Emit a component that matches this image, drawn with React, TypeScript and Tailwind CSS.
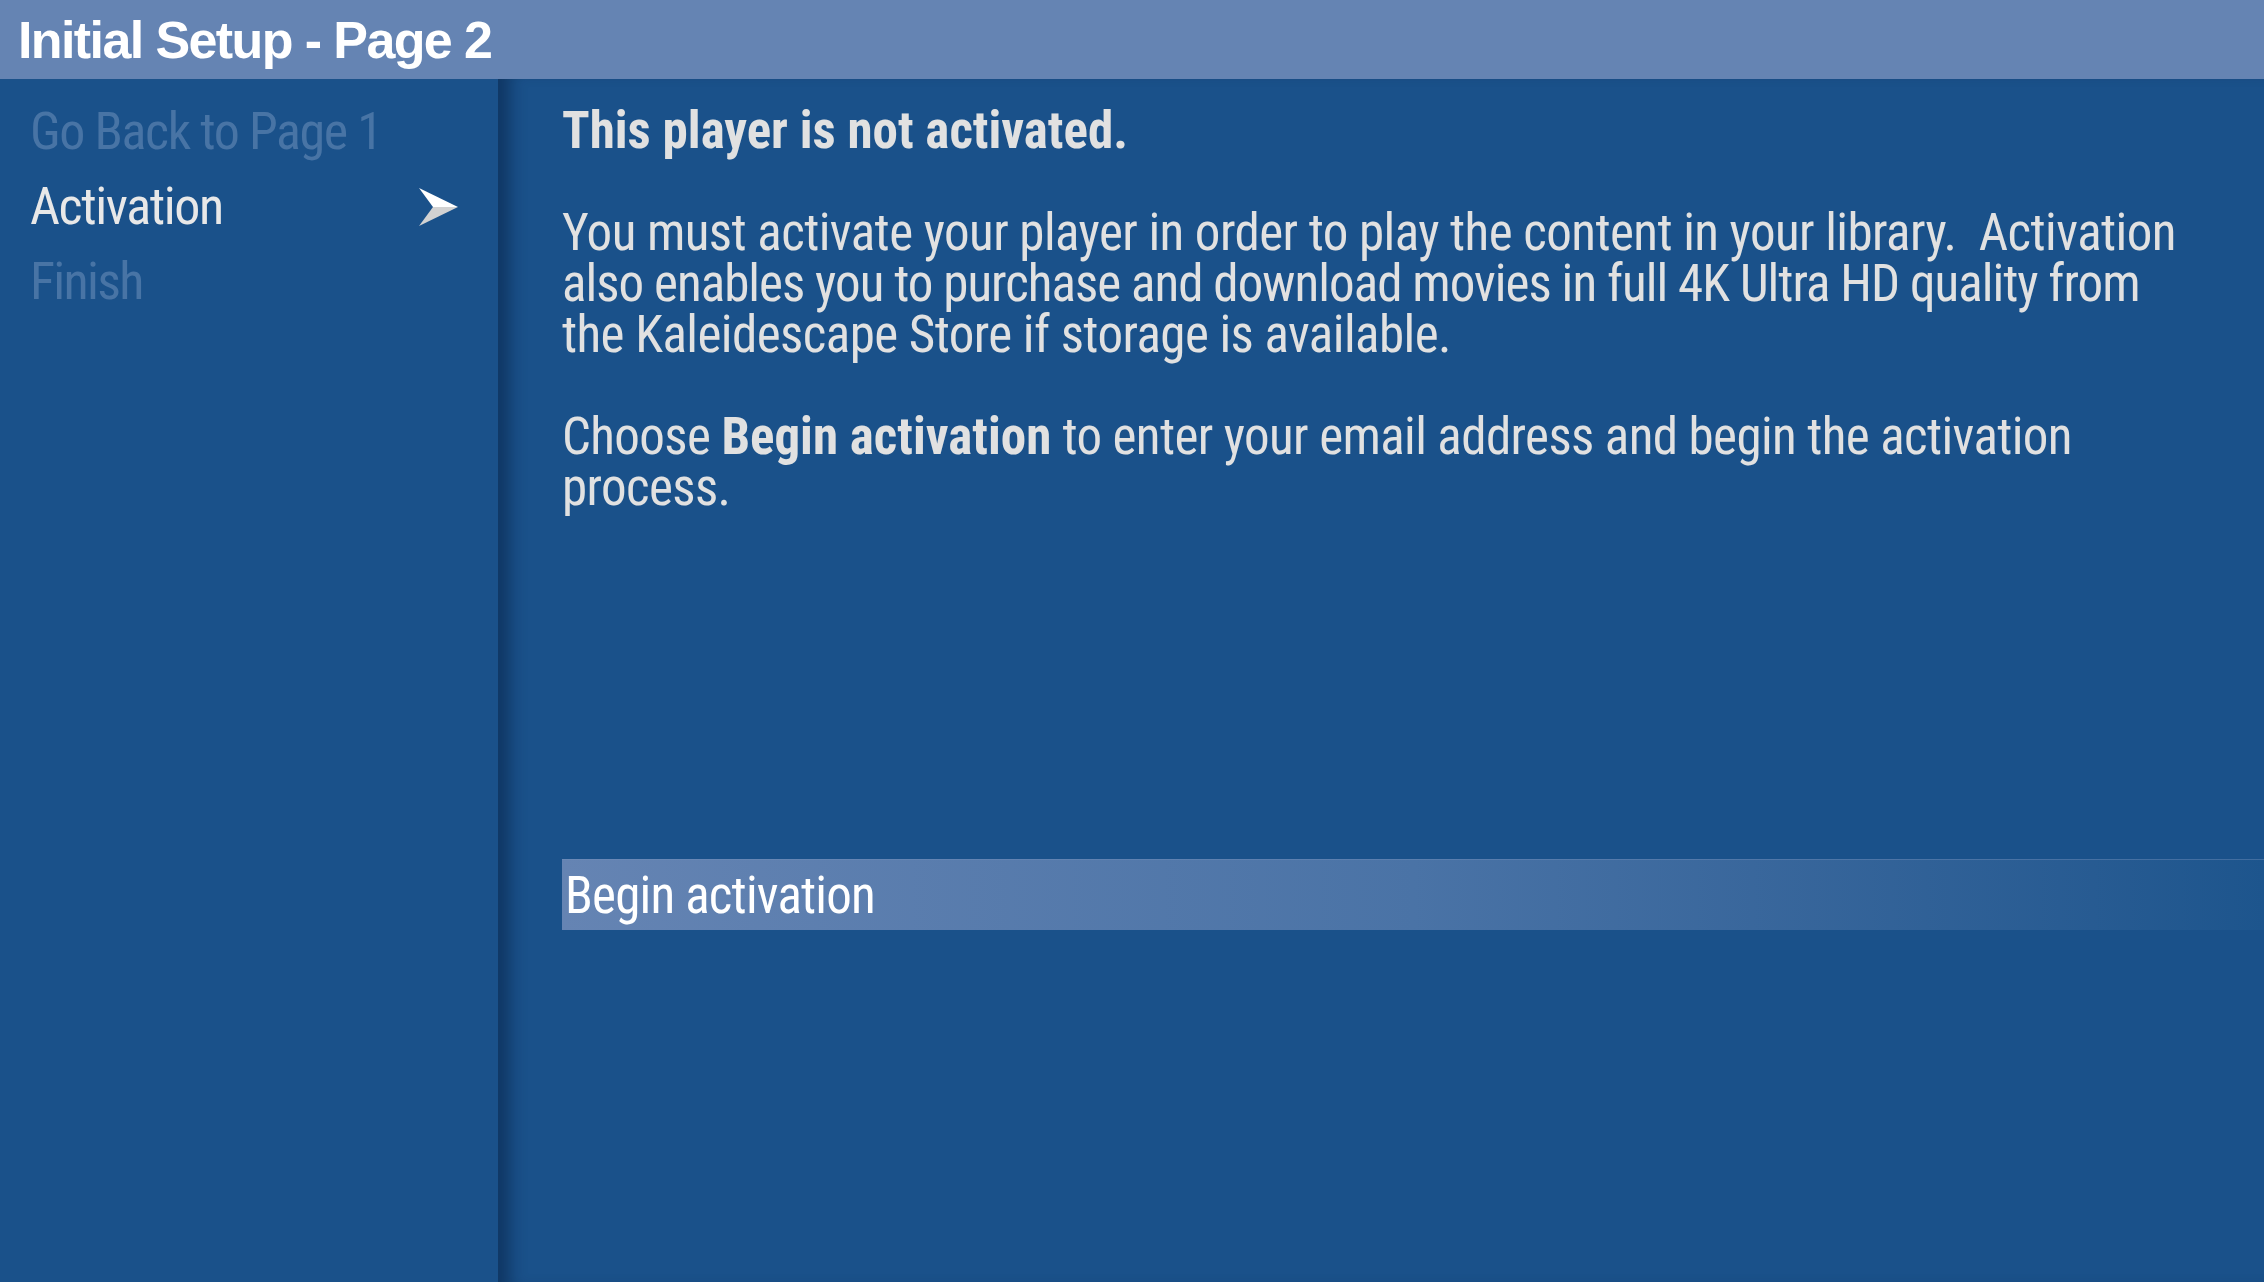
import React from "react";

const cond = "font-['Roboto_Condensed','Open_Sans','Liberation_Sans',sans-serif]";

function Arrow() {
  return (
    <svg width="39" height="38" viewBox="0 0 39 38" aria-hidden="true">
      <polygon points="0,0 39,19 14,19" fill="#ffffff" />
      <polygon points="14,19 39,19 0,38" fill="#d2d2d2" />
    </svg>
  );
}

export default function App() {
  return (
    <div className="w-[2264px] h-[1282px] flex flex-col bg-[#1a518a] overflow-hidden">
      <header className="h-[79px] shrink-0 bg-[#6584b3] pl-[18px]">
        <h1 className="font-['Liberation_Sans',Arial,sans-serif] font-bold text-[52px] leading-[79px] tracking-[-1.6px] text-white pt-[1px] whitespace-nowrap">
          Initial Setup - Page 2
        </h1>
      </header>
      <div className="flex flex-1 min-h-0">
        <nav className={`w-[498px] shrink-0 bg-[#1a518a] pt-[15px] pl-[30px] pr-[40px] ${cond} text-[52px] leading-[75px] tracking-[-1.4px] whitespace-nowrap`}>
          <div className="h-[75px] text-[#4874a5]">Go Back to Page 1</div>
          <div className="h-[75px] flex items-center justify-between text-[#e8e8e8]">
            <span>Activation</span>
            <Arrow />
          </div>
          <div className="h-[75px] text-[#4874a5] tracking-[-1.7px]">Finish</div>
        </nav>
        <main className={`flex-1 min-w-0 bg-[#1a518a] shadow-[inset_22px_0_16px_-10px_rgba(5,25,55,0.45)] pl-[64px] pt-[26px] ${cond} text-[51px] leading-[51px] text-[#e1e1e1]`}>
          <h2 className="font-bold whitespace-nowrap">This player is not activated.</h2>
          <p className="mt-[51px] whitespace-nowrap tracking-[-0.55px]">
            You must activate your player in order to play the content in your library.{"\u00a0 "}Activation
            <br />
            <span className="tracking-[-0.95px]">also enables you to purchase and download movies in full 4K Ultra HD quality from</span>
            <br />
            the Kaleidescape Store if storage is available.
          </p>
          <p className="mt-[51px] whitespace-nowrap tracking-[-0.6px]">
            Choose <span className="font-bold tracking-normal">Begin activation</span> to enter your email address and begin the activation
            <br />
            process.
          </p>
          <div className="mt-[346px] h-[71px] pl-[3px] bg-gradient-to-r from-[#6584b3] via-[#4a73a6] to-[#1d558d] border-t border-[#7590bb]/40 text-white leading-[71px] tracking-[-0.8px] whitespace-nowrap">
            Begin activation
          </div>
        </main>
      </div>
    </div>
  );
}
